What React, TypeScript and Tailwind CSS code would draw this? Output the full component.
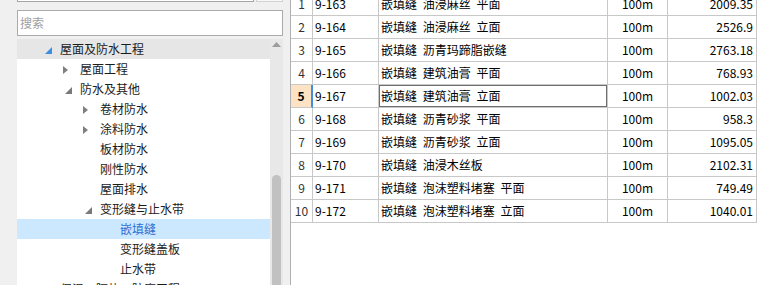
import React from 'react';

type TreeItem = {
  level: 1 | 2 | 3 | 4;
  label: string;
  arrow?: 'open' | 'closed';
  header?: boolean;
  selected?: boolean;
};

const treeItems: TreeItem[] = [
  { level: 1, label: '屋面及防水工程', arrow: 'open', header: true },
  { level: 2, label: '屋面工程', arrow: 'closed' },
  { level: 2, label: '防水及其他', arrow: 'open' },
  { level: 3, label: '卷材防水', arrow: 'closed' },
  { level: 3, label: '涂料防水', arrow: 'closed' },
  { level: 3, label: '板材防水' },
  { level: 3, label: '刚性防水' },
  { level: 3, label: '屋面排水' },
  { level: 3, label: '变形缝与止水带', arrow: 'open' },
  { level: 4, label: '嵌填缝', selected: true },
  { level: 4, label: '变形缝盖板' },
  { level: 4, label: '止水带' },
  { level: 1, label: '保温、隔热、防腐工程', arrow: 'closed' },
];

const indent = {
  1: 'pl-[27px]',
  2: 'pl-[47px]',
  3: 'pl-[67px]',
  4: 'pl-[87px]',
};

const rows = [
  [1, '9-163', '嵌填缝 油浸麻丝 平面', '100m', '2009.35'],
  [2, '9-164', '嵌填缝 油浸麻丝 立面', '100m', '2526.9'],
  [3, '9-165', '嵌填缝 沥青玛蹄脂嵌缝', '100m', '2763.18'],
  [4, '9-166', '嵌填缝 建筑油膏 平面', '100m', '768.93'],
  [5, '9-167', '嵌填缝 建筑油膏 立面', '100m', '1002.03'],
  [6, '9-168', '嵌填缝 沥青砂浆 平面', '100m', '958.3'],
  [7, '9-169', '嵌填缝 沥青砂浆 立面', '100m', '1095.05'],
  [8, '9-170', '嵌填缝 油浸木丝板', '100m', '2102.31'],
  [9, '9-171', '嵌填缝 泡沫塑料堵塞 平面', '100m', '749.49'],
  [10, '9-172', '嵌填缝 泡沫塑料堵塞 立面', '100m', '1040.01'],
] as const;

const Arrow = ({ kind, blue }: { kind: 'open' | 'closed'; blue?: boolean }) =>
  kind === 'open' ? (
    <svg width="7" height="7" viewBox="0 0 7 7" className="ml-px mt-[2px]">
      <path d="M7 0V7H0Z" fill={blue ? '#3c8fe0' : '#7a7a7a'} />
    </svg>
  ) : (
    <svg width="5" height="8" viewBox="0 0 5 8" className="-ml-px mt-px">
      <path d="M0 0L5 4L0 8Z" fill="#7f7f7f" />
    </svg>
  );

const cell = 'h-[23px] border-r border-b border-[#c8c8c8] flex items-center whitespace-nowrap overflow-hidden';

export default function App() {
  return (
    <div className="flex w-[779px] h-[285px] overflow-hidden bg-[#f0f0f0] font-['Noto_Sans_CJK_SC',sans-serif] text-[12px] text-[#1b1b1b]">
      {/* left: catalogue tree */}
      <div className="w-[290px] shrink-0 pl-[17px] pr-[7px] flex flex-col">
        <div className="flex h-[2px]">
          <div className="w-[237px] bg-white border-x border-b border-[#a5a5a5]" />
          <div className="ml-[2px] flex-1 bg-[#f7f7f7] border-x border-b border-[#d2d2d2]" />
        </div>
        <div className="mt-[8px] h-[26px] bg-white border border-[#ababab] flex items-center px-[2px] text-[#a0a0a0]">
          搜索
        </div>
        <div className="mt-[3px] flex-1 flex min-h-0">
          <div className="flex-1 bg-white">
            {treeItems.map((item, i) => (
              <div
                key={i}
                className={`h-[20px] flex items-center ${indent[item.level]} ${
                  item.header ? 'bg-[#e6e6e6]' : item.selected ? 'bg-[#cce8ff] text-[#2d6fd2]' : ''
                }`}
              >
                <span className="w-[16px] h-[20px] shrink-0 flex items-center">
                  {item.arrow && <Arrow kind={item.arrow} blue={item.header} />}
                </span>
                <span className="leading-none">{item.label}</span>
              </div>
            ))}
          </div>
          <div className="w-[13px] bg-[#e8e8e8] flex flex-col items-center">
            <svg width="9" height="5" viewBox="0 0 9 5" className="mt-[3px]">
              <path d="M4.5 0L9 5H0Z" fill="#9c9c9c" />
            </svg>
            <div className="mt-[128px] w-[9px] flex-1 bg-[#c1c1c1] rounded-t-full" />
          </div>
        </div>
      </div>

      {/* right: quota table */}
      <div className="flex-1 bg-white border-l border-[#b0b0b0] overflow-hidden text-black">
        <div className="-mt-[7px] grid grid-cols-[22px_66px_229px_60px_89px] w-fit">
          {rows.map(([no, code, name, unit, value]) => {
            const current = no === 5;
            return (
              <React.Fragment key={no}>
                <div
                  className={`${cell} justify-center ${
                    current ? 'bg-[#fde3c3] font-bold border-r-2 border-r-[#3f8ee4]' : 'text-[#333]'
                  }`}
                >
                  {no}
                </div>
                <div className={`${cell} pl-[2px]`}>{code}</div>
                <div className={`${cell} pl-[2px] relative [word-spacing:3px]`}>
                  {name}
                  {current && <span className="absolute -inset-px border-2 border-[#6f6f6f]" />}
                </div>
                <div className={`${cell} justify-center`}>{unit}</div>
                <div className={`${cell} justify-end pr-[3px]`}>{value}</div>
              </React.Fragment>
            );
          })}
        </div>
      </div>
    </div>
  );
}
